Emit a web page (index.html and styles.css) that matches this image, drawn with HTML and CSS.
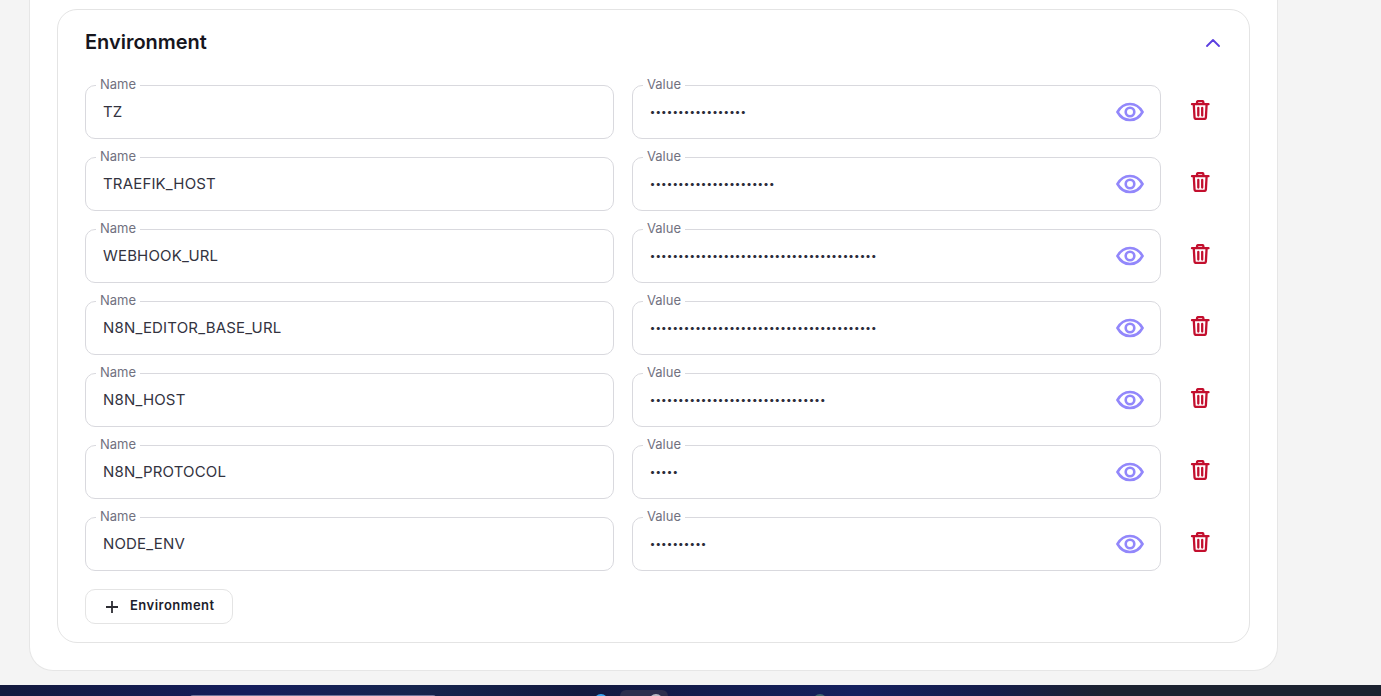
FILE: index.html
```html
<!DOCTYPE html>
<html lang="en">
<head>
<meta charset="utf-8">
<title>Environment</title>
<link rel="stylesheet" href="styles.css">
</head>
<body>
<svg class="sprite" width="0" height="0" aria-hidden="true">
  <symbol id="eye" viewBox="0 0 28 20"><path d="M1.500 10C4.500 4.600 8.800 2 14 2s9.500 2.600 12.500 8c-3 5.400-7.300 8-12.500 8S4.500 15.400 1.500 10Z"/><circle cx="14" cy="10" r="4.300"/></symbol>
  <symbol id="trash" viewBox="0 0 20 20"><path d="M2 4.200h16.500M7 4V2.500C7 1.600 7.700 1 8.500 1h3.400c.8 0 1.500.6 1.500 1.500V4M3.800 4.500l.7 12.800c.1 1 .9 1.700 1.900 1.700h7.600c1 0 1.800-.7 1.900-1.700l.7-12.800M8.300 8v7.500M12.200 8v7.500"/></symbol>
</svg>
<main class="page">
  <div class="outer">
    <section class="panel">
      <header class="panel-head">
        <h2>Environment</h2>
        <svg class="chevron" viewBox="0 0 14 8"><path d="M1 7l6-6 6 6"/></svg>
      </header>
      <div class="rows">
        <div class="row">
          <div class="field"><span class="label">Name</span><span class="text">TZ</span></div>
          <div class="field"><span class="label">Value</span><span class="dots">•••••••••••••••••</span><svg class="eye"><use href="#eye"/></svg></div>
          <svg class="trash"><use href="#trash"/></svg>
        </div>
        <div class="row">
          <div class="field"><span class="label">Name</span><span class="text">TRAEFIK_HOST</span></div>
          <div class="field"><span class="label">Value</span><span class="dots">••••••••••••••••••••••</span><svg class="eye"><use href="#eye"/></svg></div>
          <svg class="trash"><use href="#trash"/></svg>
        </div>
        <div class="row">
          <div class="field"><span class="label">Name</span><span class="text">WEBHOOK_URL</span></div>
          <div class="field"><span class="label">Value</span><span class="dots">••••••••••••••••••••••••••••••••••••••••</span><svg class="eye"><use href="#eye"/></svg></div>
          <svg class="trash"><use href="#trash"/></svg>
        </div>
        <div class="row">
          <div class="field"><span class="label">Name</span><span class="text">N8N_EDITOR_BASE_URL</span></div>
          <div class="field"><span class="label">Value</span><span class="dots">••••••••••••••••••••••••••••••••••••••••</span><svg class="eye"><use href="#eye"/></svg></div>
          <svg class="trash"><use href="#trash"/></svg>
        </div>
        <div class="row">
          <div class="field"><span class="label">Name</span><span class="text">N8N_HOST</span></div>
          <div class="field"><span class="label">Value</span><span class="dots">•••••••••••••••••••••••••••••••</span><svg class="eye"><use href="#eye"/></svg></div>
          <svg class="trash"><use href="#trash"/></svg>
        </div>
        <div class="row">
          <div class="field"><span class="label">Name</span><span class="text">N8N_PROTOCOL</span></div>
          <div class="field"><span class="label">Value</span><span class="dots">•••••</span><svg class="eye"><use href="#eye"/></svg></div>
          <svg class="trash"><use href="#trash"/></svg>
        </div>
        <div class="row">
          <div class="field"><span class="label">Name</span><span class="text">NODE_ENV</span></div>
          <div class="field"><span class="label">Value</span><span class="dots">••••••••••</span><svg class="eye"><use href="#eye"/></svg></div>
          <svg class="trash"><use href="#trash"/></svg>
        </div>
      </div>
      <button class="add" type="button">
        <svg class="plus" viewBox="0 0 14 14"><path d="M7 1v12M1 7h12"/></svg>
        <span>Environment</span>
      </button>
    </section>
  </div>
</main>
<footer class="taskbar">
  <span class="tb-search"></span>
  <span class="tb-dot tb-blue"></span>
  <span class="tb-tab"><span class="tb-dot tb-white"></span></span>
  <span class="tb-dot tb-dark"></span>
</footer>
</body>
</html>
```
FILE: styles.css
```css
* { box-sizing: border-box; }
html, body { margin: 0; height: 696px; overflow: hidden; }
body { background: #f4f4f4; font-family: Inter, "Noto Sans", sans-serif; color: #2c2c3a; }
.sprite { position: absolute; }
.page { height: 685px; padding-left: 29px; }
.outer {
  width: 1249px; height: 671px; background: #fff;
  border: 1px solid #e6e6e6; border-top: 0; border-radius: 0 0 24px 24px;
  padding: 9px 27px 0 27px;
}
.panel {
  height: 634px; border: 1px solid #e4e4e4; border-radius: 20px;
  padding: 0 27px 0 27px; background: #fff;
}
.panel-head { display: flex; align-items: center; justify-content: space-between; height: 75px; padding-bottom: 11px; padding-right: 2px; }
h2 { margin: 0; font-size: 20px; line-height: 28px; font-weight: 600; color: #16161d; letter-spacing: -.02px; }
.chevron { width: 14px; height: 8px; margin-top: 2px; fill: none; stroke: #5b3fe0; stroke-width: 1.800; stroke-linecap: round; stroke-linejoin: round; }
.rows { display: flex; flex-direction: column; gap: 18px; }
.row { display: grid; grid-template-columns: 529px 529px 20px; column-gap: 18px; align-items: center; }
.trash { width: 20px; height: 20px; margin: 0 0 5px 11px; fill: none; stroke: #c30f2e; stroke-width: 2.300; stroke-linecap: round; stroke-linejoin: round; }
.field {
  position: relative; height: 54px; display: flex; align-items: center;
  border: 1px solid #d9d9de; border-radius: 10px; padding: 0 17px;
}
.label {
  position: absolute; left: 10px; top: -9px; padding: 0 4px; background: #fff;
  font-size: 13px; line-height: 15px; color: #71717f;
}
.text { font-size: 15px; line-height: 20px; color: #33333f; letter-spacing: .17px; }
.dots { font-size: 10px; line-height: 20px; margin-top: -2px; color: #2c2c3a; letter-spacing: .64px; flex: 1; font-weight: 600; }
.eye { width: 28px; height: 20px; margin: 0 -1px 0 0; fill: none; stroke: #9287fb; stroke-width: 2.600; }
.add {
  display: flex; align-items: center; gap: 11px; width: 148px; height: 35px; margin-top: 18px;
  padding: 0 0 3px 19px; background: #fff; border: 1px solid #e4e4e4; border-radius: 10px;
  font: 600 13px/16px Inter, "Noto Sans", sans-serif; letter-spacing: .48px; color: #1d1d2b;
}
.plus { width: 14px; height: 14px; margin-top: 3px; fill: none; stroke: #2d2d33; stroke-width: 1.800; }
.taskbar {
  position: relative; height: 11px; overflow: hidden;
  background: linear-gradient(90deg, #131a3e 0%, #141d5c 18%, #16254e 30%, #12193f 42%, #14205e 62%, #151d4a 72%, #1c2230 80%, #1c2230 100%);
}
.tb-search { position: absolute; left: 190px; top: 10px; width: 246px; height: 10px; background: #70749a; border-radius: 3px 3px 0 0; }
.tb-dot { position: absolute; width: 14px; height: 14px; border-radius: 50%; }
.tb-blue { left: 594px; top: 9px; background: #38a4f0; }
.tb-dark { left: 813px; top: 9px; background: #3f6670; }
.tb-tab { position: absolute; left: 620px; top: 5px; width: 48px; height: 20px; background: #2c2f4e; border-radius: 6px; }
.tb-white { left: 29px; top: 4px; background: #b9bac4; }
```
